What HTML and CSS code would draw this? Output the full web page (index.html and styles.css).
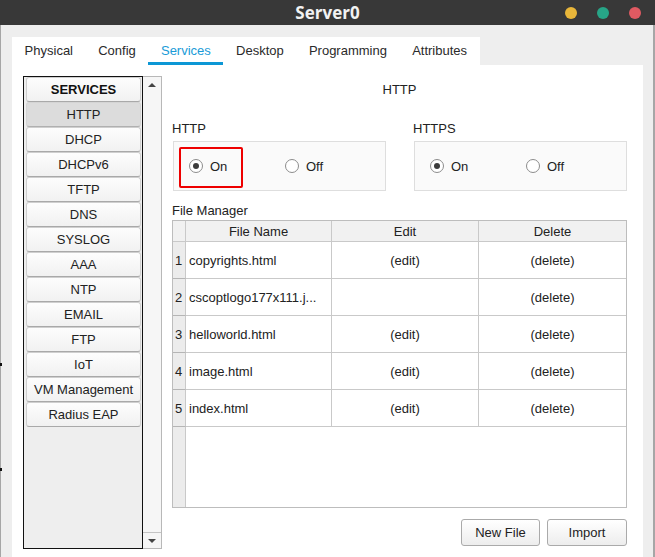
FILE: index.html
```html
<!DOCTYPE html>
<html>
<head>
<meta charset="utf-8">
<title>Server0</title>
<link rel="stylesheet" href="styles.css">
</head>
<body>
<div class="titlebar">
  <span></span>
  <span class="title">Server0</span>
  <div class="dots"><span class="dot yellow"></span><span class="dot teal"></span><span class="dot red"></span></div>
</div>
<div class="window">
  <span class="tick tick1"></span><span class="tick tick2"></span>
  <div class="tabs">
    <span class="tab">Physical</span>
    <span class="tab">Config</span>
    <span class="tab active">Services</span>
    <span class="tab">Desktop</span>
    <span class="tab">Programming</span>
    <span class="tab">Attributes</span>
  </div>
  <div class="panel">
    <div class="sidebar">
      <div class="svc-list">
        <div class="svc head">SERVICES</div>
        <div class="svc active">HTTP</div>
        <div class="svc">DHCP</div>
        <div class="svc">DHCPv6</div>
        <div class="svc">TFTP</div>
        <div class="svc">DNS</div>
        <div class="svc">SYSLOG</div>
        <div class="svc">AAA</div>
        <div class="svc">NTP</div>
        <div class="svc">EMAIL</div>
        <div class="svc">FTP</div>
        <div class="svc">IoT</div>
        <div class="svc">VM Management</div>
        <div class="svc">Radius EAP</div>
      </div>
      <div class="scrollbar">
        <div class="sb-btn up"><span class="arrow-up"></span></div>
        <div class="sb-track"></div>
        <div class="sb-btn down"><span class="arrow-down"></span></div>
      </div>
    </div>
    <div class="main">
      <div class="heading">HTTP</div>
      <div class="toggles">
        <div class="group">
          <div class="label">HTTP</div>
          <div class="box">
            <span class="highlight"></span>
            <label class="opt"><span class="radio checked"></span>On</label>
            <label class="opt"><span class="radio"></span>Off</label>
          </div>
        </div>
        <div class="group">
          <div class="label">HTTPS</div>
          <div class="box">
            <label class="opt"><span class="radio checked"></span>On</label>
            <label class="opt"><span class="radio"></span>Off</label>
          </div>
        </div>
      </div>
      <div class="label fm-label">File Manager</div>
      <div class="fm">
        <div class="row hdr">
          <div class="cell num"></div>
          <div class="cell">File Name</div>
          <div class="cell">Edit</div>
          <div class="cell last">Delete</div>
        </div>
        <div class="row">
          <div class="cell num">1</div>
          <div class="cell name">copyrights.html</div>
          <div class="cell">(edit)</div>
          <div class="cell last">(delete)</div>
        </div>
        <div class="row">
          <div class="cell num">2</div>
          <div class="cell name">cscoptlogo177x111.j...</div>
          <div class="cell"></div>
          <div class="cell last">(delete)</div>
        </div>
        <div class="row">
          <div class="cell num">3</div>
          <div class="cell name">helloworld.html</div>
          <div class="cell">(edit)</div>
          <div class="cell last">(delete)</div>
        </div>
        <div class="row">
          <div class="cell num">4</div>
          <div class="cell name">image.html</div>
          <div class="cell">(edit)</div>
          <div class="cell last">(delete)</div>
        </div>
        <div class="row">
          <div class="cell num">5</div>
          <div class="cell name">index.html</div>
          <div class="cell">(edit)</div>
          <div class="cell last">(delete)</div>
        </div>
      </div>
      <div class="actions">
        <button class="btn new">New File</button>
        <button class="btn imp">Import</button>
      </div>
    </div>
  </div>
</div>
</body>
</html>
```
FILE: styles.css
```css
* { box-sizing: border-box; }
html, body { margin: 0; padding: 0; }
body {
  width: 655px;
  height: 557px;
  overflow: hidden;
  background: #eeeeee;
  font-family: "Liberation Sans", Arial, sans-serif;
  font-size: 13px;
  color: #222;
}
.titlebar {
  height: 25px;
  background: #383838;
  display: grid;
  grid-template-columns: 1fr auto 1fr;
  align-items: center;
}
.title {
  font-family: "Open Sans", "DejaVu Sans", sans-serif;
  font-weight: 700;
  font-size: 17px;
  color: #f2f2f2;
  line-height: 25px;
}
.dots {
  justify-self: end;
  display: flex;
  gap: 20px;
  padding-right: 14px;
}
.dot { width: 12px; height: 12px; border-radius: 50%; display: block; }
.yellow { background: #e8b63a; }
.teal { background: #27a587; }
.red { background: #e05a62; }

.window {
  position: relative;
  height: 532px;
  border-left: 1px solid #a6a6a6;
  border-right: 2px solid #a6a6a6;
  padding: 12px 10px 0 11px;
}
.tick { position: absolute; left: -1px; width: 2px; height: 3px; background: #111; }
.tick1 { top: 338px; }
.tick2 { top: 443px; }

.tabs {
  display: inline-flex;
  background: #fff;
  height: 28px;
  vertical-align: top;
}
.tab {
  padding: 0 12.6px;
  line-height: 28px;
  color: #2a2a2a;
}
.tab.active {
  color: #1a9bd7;
  box-shadow: inset 0 -3px 0 #0c97d5;
}
.panel {
  background: #fff;
  height: 492px;
  padding: 11px 16px 0 11px;
  display: flex;
  gap: 10px;
}
.sidebar {
  display: flex;
  height: 473px;
  flex: none;
}
.svc-list {
  width: 120px;
  border: 1px solid #111;
  background: #eeeeee;
}
.svc {
  height: 25px;
  margin: 0 1px 0 2px;
  line-height: 24px;
  text-align: center;
  border: 1px solid #cfcfcf;
  border-bottom-color: #a9a9a9;
  border-radius: 3px;
  background: linear-gradient(#fdfdfd, #f1f1f1);
  color: #222;
  white-space: nowrap;
}
.svc.head { font-weight: bold; color: #111; }
.svc.active { background: #dcdcdc; border-color: #d4d4d4; border-bottom-color: #b0b0b0; }

.scrollbar {
  width: 19px;
  border: 1px solid #b8b8b8;
  border-left: none;
  background: #f6f6f6;
  display: flex;
  flex-direction: column;
}
.sb-btn { height: 16px; display: flex; align-items: center; justify-content: center; }
.sb-track { flex: 1; }
.sb-btn.down { border-top: 1px solid #c4c4c4; }
.arrow-up { width: 0; height: 0; border-left: 4px solid transparent; border-right: 4px solid transparent; border-bottom: 4px solid #444; }
.arrow-down { width: 0; height: 0; border-left: 4px solid transparent; border-right: 4px solid transparent; border-top: 4px solid #444; }

.main {
  width: 455px;
  flex: none;
}
.heading {
  height: 26px;
  line-height: 27px;
  text-align: center;
}
.toggles {
  display: flex;
  gap: 27px;
  margin-top: 17px;
}
.group { width: 214px; }
.label { height: 18px; line-height: 19px; }
.box {
  position: relative;
  margin-top: 4px;
  margin-left: 1px;
  height: 50px;
  border: 1px solid #dedede;
  background: #fafafa;
  display: flex;
  align-items: center;
  padding-left: 15px;
}
.opt {
  width: 96px;
  display: flex;
  align-items: center;
  gap: 7px;
}
.radio {
  width: 14px;
  height: 14px;
  border-radius: 50%;
  border: 1px solid #8c8c8c;
  background: #fff;
  display: flex;
  align-items: center;
  justify-content: center;
}
.radio.checked::after {
  content: "";
  width: 6px;
  height: 6px;
  border-radius: 50%;
  background: #3c3c3c;
}
.highlight {
  position: absolute;
  left: 5px;
  top: 5px;
  width: 64px;
  height: 41px;
  border: 2px solid #ee0000;
  border-radius: 2px;
}
.fm-label { margin-top: 10px; }
.fm {
  margin-top: 1px;
  height: 288px;
  border: 1px solid #bdbdbd;
  background: linear-gradient(to right, #ececec 12px, #c9c9c9 12px 13px, #fff 13px);
}
.row {
  display: grid;
  grid-template-columns: 13px 146px 147px 1fr;
  height: 37px;
}
.row.hdr { height: 21px; background: #f1f1f1; }
.cell {
  border-right: 1px solid #c9c9c9;
  border-bottom: 1px solid #c9c9c9;
  display: flex;
  align-items: center;
  justify-content: center;
  white-space: nowrap;
  overflow: hidden;
}
.cell.last { border-right: none; }
.cell.name { justify-content: flex-start; padding-left: 3px; }
.cell.num {
  background: #ececec;
  border-bottom-color: #b5b5b5;
  justify-content: flex-start;
  padding-left: 2px;
}
.hdr .cell.num { background: #f1f1f1; border-bottom-color: #c9c9c9; }
.actions {
  margin-top: 11px;
  display: flex;
  justify-content: flex-end;
  gap: 7px;
}
.btn {
  height: 27px;
  font-family: "Liberation Sans", Arial, sans-serif;
  font-size: 13px;
  color: #222;
  border: 1px solid #aaaaaa;
  border-radius: 3px;
  background: linear-gradient(#ffffff, #ededed);
  padding: 0;
}
.btn.new { width: 79px; }
.btn.imp { width: 80px; }
```
